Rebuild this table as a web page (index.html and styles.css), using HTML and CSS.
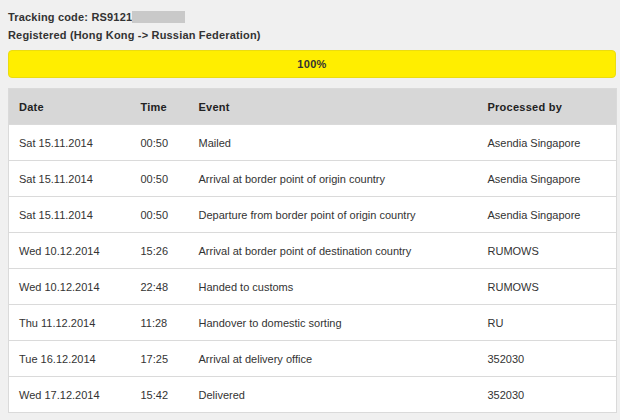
FILE: index.html
```html
<!DOCTYPE html>
<html lang="en">
<head>
<meta charset="utf-8">
<title>Tracking</title>
<link rel="stylesheet" href="styles.css">
</head>
<body>
<div class="page">
  <div class="info">
    <div class="line">Tracking code: RS9121<span class="redacted"></span></div>
    <div class="line">Registered (Hong Kong -&gt; Russian Federation)</div>
  </div>
  <div class="progress">100%</div>
  <table class="events">
    <colgroup>
      <col class="c-date">
      <col class="c-time">
      <col class="c-event">
      <col class="c-proc">
    </colgroup>
    <thead>
      <tr><th>Date</th><th>Time</th><th>Event</th><th>Processed by</th></tr>
    </thead>
    <tbody>
      <tr><td>Sat 15.11.2014</td><td>00:50</td><td>Mailed</td><td>Asendia Singapore</td></tr>
      <tr><td>Sat 15.11.2014</td><td>00:50</td><td>Arrival at border point of origin country</td><td>Asendia Singapore</td></tr>
      <tr><td>Sat 15.11.2014</td><td>00:50</td><td>Departure from border point of origin country</td><td>Asendia Singapore</td></tr>
      <tr><td>Wed 10.12.2014</td><td>15:26</td><td>Arrival at border point of destination country</td><td>RUMOWS</td></tr>
      <tr><td>Wed 10.12.2014</td><td>22:48</td><td>Handed to customs</td><td>RUMOWS</td></tr>
      <tr><td>Thu 11.12.2014</td><td>11:28</td><td>Handover to domestic sorting</td><td>RU</td></tr>
      <tr><td>Tue 16.12.2014</td><td>17:25</td><td>Arrival at delivery office</td><td>352030</td></tr>
      <tr><td>Wed 17.12.2014</td><td>15:42</td><td>Delivered</td><td>352030</td></tr>
    </tbody>
  </table>
</div>
</body>
</html>
```

FILE: styles.css
```css
html, body {
  margin: 0;
  padding: 0;
  background: #f0f0f0;
  overflow: hidden;
}
body {
  font-family: "Liberation Sans", Arial, sans-serif;
  font-size: 11px;
  color: #333;
}
.page {
  padding: 8px 0 0 8px;
  width: 608px;
}
.info {
  font-weight: bold;
  color: #333;
  letter-spacing: 0.18px;
}
.line {
  line-height: 18px;
}
.redacted {
  display: inline-block;
  width: 53px;
  height: 12px;
  background: #c9c9c9;
  vertical-align: -2px;
}
.progress {
  margin-top: 6px;
  height: 26px;
  line-height: 26px;
  background: #ffee00;
  border: 1px solid #ebdc10;
  border-radius: 4px;
  text-align: center;
  font-weight: bold;
  color: #333;
  letter-spacing: 0.3px;
}
.events {
  margin-top: 10px;
  width: 608px;
  border-collapse: collapse;
  table-layout: fixed;
  border: 1px solid #dadada;
  background: #fff;
}
.c-date { width: 122px; }
.c-time { width: 58px; }
.c-event { width: 289px; }
.c-proc { width: 139px; }
.events th,
.events td {
  height: 35px;
  padding: 0 0 0 10px;
  text-align: left;
  vertical-align: middle;
  border-bottom: 1px solid #dadada;
  white-space: nowrap;
}
.events th {
  background: #d7d7d7;
  font-weight: bold;
  color: #222;
  letter-spacing: 0.25px;
}
.events td {
  color: #333;
}
```
